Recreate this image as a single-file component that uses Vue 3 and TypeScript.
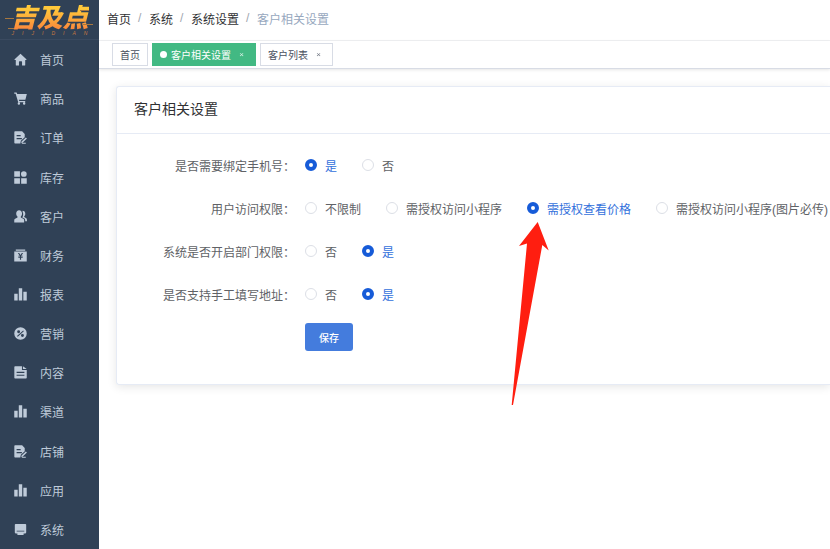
<script setup lang="ts">
import { reactive } from 'vue'

type IconName = 'home' | 'cart' | 'order' | 'grid' | 'user' | 'money' | 'chart' | 'discount' | 'doc' | 'monitor'

interface MenuItem {
  label: string
  icon: IconName
}

interface Field {
  key: string
  label: string
  options: string[]
}

const icons: Record<IconName, string> = {
  home: 'M8 .8.800 7.600c-.4.4-.2.900.3.900H2.200v6.300c0 .4.3.7.7.7h3.200V11c0-.4.3-.7.7-.7h2.400c.4 0 .7.3.7.7v4.500h3.200c.4 0 .7-.3.7-.7V8.500h1.100c.5 0 .7-.5.3-.9z',
  cart: 'M.3.6h2.900l.8 2h11.800l-1.800 7H6l.5 1.400h7.300v1.500H5.200L2 2.100H.3zM6 12.700a1.500 1.500 0 1 1 0 3 1.500 1.500 0 0 1 0-3zm6.500 0a1.500 1.500 0 1 1 0 3 1.500 1.500 0 0 1 0-3z',
  order: 'M1.300.4h8.700l3.200 3.400v4L8.400 12l-.6 3.400H1.300c-.5 0-.9-.4-.9-.9V1.300c0-.5.4-.9.9-.9zM3.200 5v1.400h5V5zm0 3.600V10h6.500V8.600zM14.600 8l1.300 1.300-5.100 5-2 .6.500-2zM10 14.500h4.500v1.100H9.400z',
  grid: 'M.3.3h7V7h-7zM12.100.2a3.500 3.500 0 1 1 0 7 3.500 3.500 0 0 1 0-7zM.3 8.900h7v6.700h-7zm8.500 0h6.900v6.700H8.800z',
  user: 'M6.300.3c2.200 0 3.600 1.600 3.600 4 0 1.600-.6 2.900-1.500 3.700v1.200l3 1.700c.8.400 1.100 1 1.100 1.900v2.500H.3v-2.500c0-.9.3-1.500 1.100-1.900l2.900-1.700V8C3.300 7.200 2.700 5.900 2.700 4.300c0-2.400 1.400-4 3.600-4zM10.600 1c2 0 3.300 1.500 3.300 3.600 0 1.400-.5 2.400-1.300 3.100v1l2.400 1.600c.7.4.9.9.9 1.600v1.800h-2.100v-.9c0-1.100-.5-2-1.500-2.500l-2.100-1.200c.7-1 1.100-2.200 1.100-3.500 0-1.300-.3-2.200-.7-3z',
  money: 'M2.200.5h11.600v1.600H2.200zM.3 3h15.400v12.500H.3zM4.800 5l2.200 3.200H5.300v1h2v.9h-2v1h2v2.200h1.400v-2.200h2v-1h-2v-.9h2v-1H9L11.200 5H9.600L8 7.400 6.400 5z',
  chart: 'M.3 7h4.200v8.500H.3zM5.900.3h4.200v15.200H5.900zm5.600 4.200h4.200v11h-4.200z',
  discount: 'M8 .3a7.700 7.700 0 1 1 0 15.400A7.700 7.700 0 0 1 8 .3zm3.300 3.900-7.600 7 .9.900 7.500-7zM5.700 4a1.800 1.800 0 1 0 0 3.600 1.800 1.800 0 0 0 0-3.600zm4.700 4.600a1.800 1.800 0 1 0 0 3.600 1.800 1.800 0 0 0 0-3.600z',
  doc: 'M1.300.4h8.500v4.500h5.900v9.600c0 .5-.4.9-.9.900H1.300c-.5 0-.9-.4-.9-.9V1.300c0-.5.4-.9.9-.9zM11 .4l4.600 3.300H11zM3.200 7.200v1.300h9.600V7.200zm0 3.500V12h9.600v-1.300z',
  monitor: 'M2 1.200h12c.6 0 1 .4 1 1v9.600c0 .6-.4 1-1 1h-2.200v1.900H4.200v-1.900H2c-.6 0-1-.4-1-1V2.200c0-.6.4-1 1-1zM3.300 9.400v1.200h9.400V9.400z',
}

const menu: MenuItem[] = [
  { label: '首页', icon: 'home' },
  { label: '商品', icon: 'cart' },
  { label: '订单', icon: 'order' },
  { label: '库存', icon: 'grid' },
  { label: '客户', icon: 'user' },
  { label: '财务', icon: 'money' },
  { label: '报表', icon: 'chart' },
  { label: '营销', icon: 'discount' },
  { label: '内容', icon: 'doc' },
  { label: '渠道', icon: 'chart' },
  { label: '店铺', icon: 'order' },
  { label: '应用', icon: 'chart' },
  { label: '系统', icon: 'monitor' },
]

const crumbs: string[] = ['首页', '系统', '系统设置']

const fields: Field[] = [
  { key: 'phone', label: '是否需要绑定手机号：', options: ['是', '否'] },
  { key: 'access', label: '用户访问权限：', options: ['不限制', '需授权访问小程序', '需授权查看价格', '需授权访问小程序(图片必传)'] },
  { key: 'department', label: '系统是否开启部门权限：', options: ['否', '是'] },
  { key: 'address', label: '是否支持手工填写地址：', options: ['否', '是'] },
]

const form = reactive<Record<string, string>>({
  phone: '是',
  access: '需授权查看价格',
  department: '是',
  address: '是',
})
</script>

<template>
  <div class="layout" lang="zh-CN">
    <aside class="sidebar">
      <a class="logo" href="#">
        <svg class="streaks" viewBox="0 0 99 40" aria-hidden="true">
          <path d="M5 18.500h9M83 24.500h10M8 28.500h6M80 10.500h9" />
        </svg>
        <span class="logo-name">吉及点</span>
        <span class="logo-latin"><i v-for="(c, n) in 'JIJIDIAN'" :key="n">{{ c }}</i></span>
      </a>
      <nav class="menu">
        <a v-for="item in menu" :key="item.label" class="menu-item" href="#">
          <svg class="menu-icon" viewBox="0 0 16 16" aria-hidden="true">
            <path :d="icons[item.icon]" fill-rule="evenodd" />
          </svg>
          <span>{{ item.label }}</span>
        </a>
      </nav>
    </aside>

    <div class="content">
      <header class="topbar">
        <template v-for="c in crumbs" :key="c">
          <a class="crumb" href="#">{{ c }}</a>
          <span class="slash">/</span>
        </template>
        <span class="crumb-current">客户相关设置</span>
      </header>

      <nav class="tags">
        <a class="tag" href="#">首页</a>
        <span class="tag active">
          <span class="dot"></span>
          <a href="#">客户相关设置</a>
          <button class="close" type="button" aria-label="关闭">×</button>
        </span>
        <span class="tag">
          <a href="#">客户列表</a>
          <button class="close" type="button" aria-label="关闭">×</button>
        </span>
      </nav>

      <main class="page">
        <section class="card">
          <h1 class="card-title">客户相关设置</h1>
          <form class="form" @submit.prevent>
            <div v-for="f in fields" :key="f.key" class="row" role="radiogroup" :aria-labelledby="f.key">
              <span :id="f.key" class="row-label">{{ f.label }}</span>
              <div class="options">
                <label v-for="o in f.options" :key="o" class="option">
                  <input v-model="form[f.key]" type="radio" :name="f.key" :value="o" />
                  <span>{{ o }}</span>
                </label>
              </div>
            </div>
            <div class="row">
              <span class="row-label"></span>
              <button class="save" type="submit">保存</button>
            </div>
          </form>
        </section>
        <svg class="pointer" viewBox="0 0 38 184" aria-hidden="true">
          <path d="M26.700 0 37.700 28.500 31.300 23 2 183H.7L16 21.500 8 24z" />
        </svg>
      </main>
    </div>
  </div>
</template>

<style>
body {
  background: #fff;
}
</style>

<style scoped>
.layout {
  display: flex;
  min-height: 100vh;
  font-family: 'Liberation Sans', 'Noto Sans CJK SC', sans-serif;
  font-size: 12px;
  color: #606266;
}

a {
  color: inherit;
  text-decoration: none;
}

.sidebar {
  display: flex;
  flex-direction: column;
  flex: none;
  width: 99px;
  background: #304156;
}

.logo {
  position: relative;
  display: flex;
  flex-direction: column;
  align-items: center;
  box-sizing: border-box;
  height: 40px;
  padding-top: 5px;
  border-bottom: 1px solid #3a4a60;
}

.streaks {
  position: absolute;
  inset: 0;
  width: 100%;
  fill: none;
  stroke: #a8773f;
}

.logo-name {
  font-size: 26px;
  font-style: italic;
  font-weight: 900;
  line-height: 26px;
  color: transparent;
  background: linear-gradient(#ffc83a 15%, #fb8b3c 90%);
  background-clip: text;
  -webkit-background-clip: text;
}

.logo-latin {
  display: flex;
  justify-content: space-between;
  width: 76px;
  font-size: 5px;
  line-height: 5px;
  color: #c9783f;
}

.menu {
  display: grid;
  flex: 1;
  grid-auto-rows: 1fr;
}

.menu-item {
  display: flex;
  align-items: center;
  gap: 13px;
  padding-left: 14px;
  color: #bfcbd9;
}

.menu-icon {
  width: 13px;
  height: 13px;
  fill: currentColor;
}

.content {
  display: flex;
  flex-direction: column;
  flex: 1;
  min-width: 0;
}

.topbar {
  display: flex;
  align-items: center;
  gap: 7px;
  box-sizing: border-box;
  height: 41px;
  padding: 0 8px 4px;
  border-bottom: 1px solid #f0f1f3;
}

.crumb {
  color: #303133;
}

.slash {
  width: 4px;
  color: #a0a6b0;
}

.crumb-current {
  color: #97a8be;
}

.tags {
  display: flex;
  gap: 4px;
  padding: 2px 13px;
  border-bottom: 1px solid #d8dce5;
  box-shadow: 0 1px 3px rgba(0, 0, 0, 0.1);
}

.tag {
  display: flex;
  align-items: center;
  box-sizing: border-box;
  height: 23px;
  padding: 0 7px;
  border: 1px solid #d8dce5;
  font-size: 10px;
  color: #495060;
}

.tag.active {
  border-color: #42b983;
  background: #42b983;
  color: #fff;
}

.dot {
  width: 7px;
  height: 7px;
  margin-right: 4px;
  border-radius: 50%;
  background: #fff;
}

.close {
  width: 13px;
  margin-left: 4px;
  padding: 0;
  border: 0;
  background: none;
  font: inherit;
  font-size: 8px;
  color: inherit;
  opacity: 0.8;
}

.page {
  position: relative;
  flex: 1;
  padding: 17px 0 17px 17px;
  overflow: hidden;
}

.card {
  border: 1px solid #e6ebf5;
  border-right: 0;
  border-radius: 3px 0 0 3px;
  box-shadow: 0 2px 10px rgba(0, 0, 0, 0.1);
}

.card-title {
  margin: 0;
  padding: 11px 17px 13px;
  border-bottom: 1px solid #e6ebf5;
  font-size: 14px;
  font-weight: 400;
  line-height: 22px;
  color: #303133;
}

.form {
  display: grid;
  gap: 15px;
  padding: 17px 0 33px;
}

.row {
  display: flex;
  align-items: center;
  gap: 10px;
  height: 28px;
  white-space: nowrap;
}

.row-label {
  flex: none;
  width: 178px;
  text-align: right;
}

.options {
  display: flex;
  gap: 25px;
}

.option {
  display: flex;
  align-items: center;
  gap: 8px;
}

.option input {
  flex: none;
  width: 12px;
  height: 12px;
  margin: 0;
  border: 1px solid #dcdfe6;
  border-radius: 50%;
  background: #fff;
  appearance: none;
}

.option input:checked {
  border: 4px solid #165bd8;
}

.option input:checked + span {
  color: #3371dc;
}

.save {
  width: 48px;
  height: 28px;
  padding: 0;
  border: 0;
  border-radius: 3px;
  background: #447cdd;
  font: inherit;
  font-size: 10px;
  font-weight: 500;
  color: #fff;
}

.pointer {
  position: absolute;
  top: 153px;
  left: 412px;
  width: 38px;
  height: 184px;
  fill: #ff1e10;
}
</style>
